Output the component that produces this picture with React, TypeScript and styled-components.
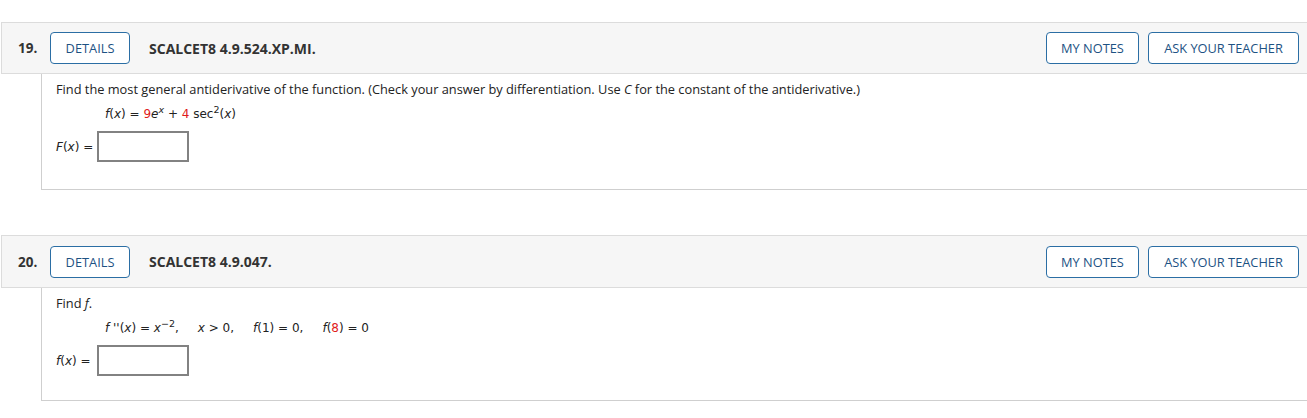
import React from "react";
import styled, { createGlobalStyle } from "styled-components";

const Global = createGlobalStyle`
  html, body { margin: 0; padding: 0; background: #fff; overflow: hidden; }
  body { font-family: "Open Sans", "Noto Sans", sans-serif; color: #333; }
`;

const Page = styled.div`
  width: 1330px;
  padding-top: 22px;
  padding-left: 1px;
  display: flex;
  flex-direction: column;
  gap: 45px;
`;

const Question = styled.section`
  display: flex;
  flex-direction: column;
`;

const Header = styled.div<{ $h: number }>`
  display: flex;
  align-items: center;
  height: ${(p) => p.$h}px;
  box-sizing: border-box;
  background: #f6f6f6;
  border: 1px solid #dcdcdc;
  padding-left: 16px;
`;

const Num = styled.span`
  width: 32px;
  font-size: 13.5px;
  font-weight: 700;
  color: #333;
`;

const OutlineButton = styled.button<{ $w: number }>`
  width: ${(p) => p.$w}px;
  height: 32px;
  box-sizing: border-box;
  border: 1px solid #2b6ea4;
  border-radius: 4px;
  background: #fff;
  color: #1d5283;
  font-family: "Open Sans", sans-serif;
  font-size: 12.8px;
  font-weight: 500;
  padding: 0;
  display: flex;
  align-items: center;
  justify-content: center;
`;

const Title = styled.span`
  margin-left: 19px;
  font-size: 14px;
  font-weight: 700;
  color: #333;
  flex: 1;
`;

const RightButtons = styled.div`
  display: flex;
  gap: 9px;
  margin-right: 31px;
`;

const Body = styled.div<{ $pb: number }>`
  margin-left: 40px;
  border-left: 1px solid #cfcfcf;
  border-bottom: 1px solid #cfcfcf;
  padding: 6px 0 ${(p) => p.$pb}px 14px;
  display: flex;
  flex-direction: column;
`;

const Prompt = styled.p`
  margin: 0;
  font-family: "Open Sans", sans-serif;
  font-size: 12.8px;
  line-height: 18px;
  color: #222;
`;

const MathLine = styled.div`
  margin-top: 7px;
  margin-left: 49px;
  font-family: "DejaVu Sans", Verdana, sans-serif;
  font-size: 12px;
  line-height: 18px;
  color: #222;
  white-space: pre;
`;

const Red = styled.span`
  color: #e01b1b;
`;

const Sup = styled.sup`
  font-size: 9.5px;
  line-height: 0;
  vertical-align: 5px;
`;

const Gap = styled.span`
  display: inline-block;
  width: 19px;
`;

const AnswerRow = styled.div`
  margin-top: 8px;
  display: flex;
  align-items: center;
  gap: 5px;
`;

const AnswerLabel = styled.span`
  font-family: "DejaVu Sans", Verdana, sans-serif;
  font-size: 12px;
  color: #222;
  width: 36px;
  white-space: pre;
`;

const AnswerBox = styled.div`
  width: 92px;
  height: 31px;
  box-sizing: border-box;
  border: 2px solid #828282;
  background: #fff;
`;

export default function App() {
  return (
    <>
      <Global />
      <Page>
        <Question>
          <Header $h={52}>
            <Num>19.</Num>
            <OutlineButton $w={80}>DETAILS</OutlineButton>
            <Title>SCALCET8 4.9.524.XP.MI.</Title>
            <RightButtons>
              <OutlineButton $w={93}>MY NOTES</OutlineButton>
              <OutlineButton $w={151}>ASK YOUR TEACHER</OutlineButton>
            </RightButtons>
          </Header>
          <Body $pb={27}>
            <Prompt>
              Find the most general antiderivative of the function. (Check your answer by differentiation. Use{" "}
              <i>C</i> for the constant of the antiderivative.)
            </Prompt>
            <MathLine>
              <i>f</i>(<i>x</i>) = <Red>9</Red><i>e</i>
              <Sup>
                <i>x</i>
              </Sup>{" "}
              + <Red>4</Red> sec<Sup>2</Sup>(<i>x</i>)
            </MathLine>
            <AnswerRow>
              <AnswerLabel>
                <i>F</i>(<i>x</i>) =
              </AnswerLabel>
              <AnswerBox />
            </AnswerRow>
          </Body>
        </Question>
        <Question>
          <Header $h={53}>
            <Num>20.</Num>
            <OutlineButton $w={80}>DETAILS</OutlineButton>
            <Title>SCALCET8 4.9.047.</Title>
            <RightButtons>
              <OutlineButton $w={93}>MY NOTES</OutlineButton>
              <OutlineButton $w={151}>ASK YOUR TEACHER</OutlineButton>
            </RightButtons>
          </Header>
          <Body $pb={24}>
            <Prompt>
              Find <i>f</i>.
            </Prompt>
            <MathLine>
              <i>f</i> ''(<i>x</i>) = <i>x</i>
              <Sup>−2</Sup>,<Gap />
              <i>x</i> &gt; 0,<Gap />
              <i>f</i>(1) = 0,<Gap />
              <i>f</i>(<Red>8</Red>) = 0
            </MathLine>
            <AnswerRow>
              <AnswerLabel>
                <i>f</i>(<i>x</i>) =
              </AnswerLabel>
              <AnswerBox />
            </AnswerRow>
          </Body>
        </Question>
      </Page>
    </>
  );
}
